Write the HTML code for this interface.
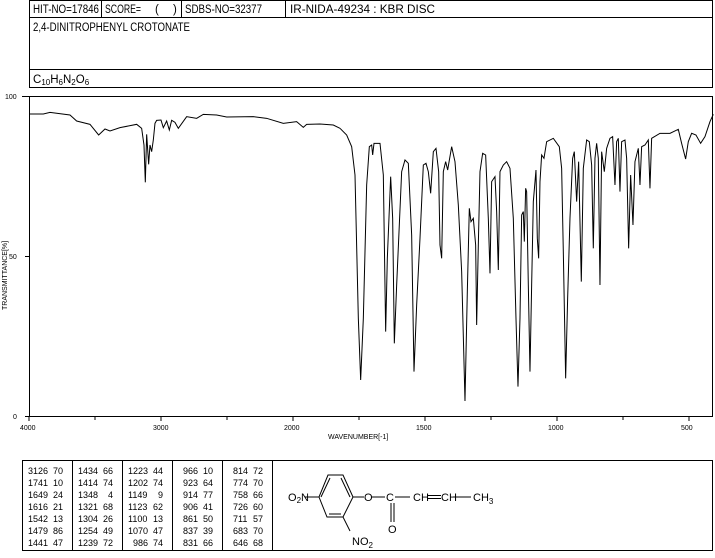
<!DOCTYPE html>
<html><head><meta charset="utf-8"><style>
body{margin:0;background:#fff;width:715px;height:553px;overflow:hidden;font-family:"Liberation Sans",sans-serif}
svg text{font-family:"Liberation Sans",sans-serif;fill:#000}
</style></head><body>
<svg width="715" height="553" viewBox="0 0 715 553" xmlns="http://www.w3.org/2000/svg">
<g fill="none" stroke="#000" stroke-width="1">
<rect x="29.5" y="0.5" width="683" height="87"/>
<line x1="29" y1="17.5" x2="713" y2="17.5"/>
<line x1="101.5" y1="0" x2="101.5" y2="17"/>
<line x1="181.5" y1="0" x2="181.5" y2="17"/>
<line x1="285.5" y1="0" x2="285.5" y2="17"/>
<line x1="29" y1="69.5" x2="713" y2="69.5"/>
<rect x="29.5" y="96.5" width="683" height="320"/>
<line x1="22" y1="96.5" x2="29" y2="96.5"/>
<line x1="25" y1="256.5" x2="29" y2="256.5"/>
<line x1="25" y1="416.5" x2="29" y2="416.5"/>
</g>
<g font-size="11.5">
<text x="33" y="13" textLength="66" lengthAdjust="spacingAndGlyphs">HIT-NO=17846</text>
<text x="105" y="13" textLength="36" lengthAdjust="spacingAndGlyphs">SCORE=</text>
<text x="155" y="13">(</text><text x="173" y="13">)</text>
<text x="185" y="13" textLength="77" lengthAdjust="spacingAndGlyphs">SDBS-NO=32377</text>
<text x="290" y="13" textLength="145" lengthAdjust="spacingAndGlyphs">IR-NIDA-49234 : KBR DISC</text>
<text x="33" y="31" textLength="157" lengthAdjust="spacingAndGlyphs">2,4-DINITROPHENYL CROTONATE</text>
<text x="33" y="83" font-size="11.5">C<tspan font-size="8" dy="2">10</tspan><tspan dy="-2">H</tspan><tspan font-size="8" dy="2">6</tspan><tspan dy="-2">N</tspan><tspan font-size="8" dy="2">2</tspan><tspan dy="-2">O</tspan><tspan font-size="8" dy="2">6</tspan></text>
</g>
<g font-size="7">
<text x="5" y="99">100</text>
<text x="9" y="259">50</text>
<text x="13" y="419">0</text>
<text x="20" y="430">4000</text>
<text x="153" y="430">3000</text>
<text x="284" y="430">2000</text>
<text x="416" y="430">1500</text>
<text x="548" y="430">1000</text>
<text x="681" y="430">500</text>
<text x="328" y="439">WAVENUMBER[-1]</text>
<text transform="translate(7,310) rotate(-90)">TRANSMITTANCE[%]</text>
</g>
<g stroke="#000" stroke-width="1">
<line x1="29" y1="417" x2="29" y2="421"/><line x1="95" y1="417" x2="95" y2="420"/><line x1="161" y1="417" x2="161" y2="421"/><line x1="227" y1="417" x2="227" y2="420"/><line x1="293" y1="417" x2="293" y2="421"/><line x1="359" y1="417" x2="359" y2="420"/><line x1="425" y1="417" x2="425" y2="421"/><line x1="491" y1="417" x2="491" y2="420"/><line x1="557" y1="417" x2="557" y2="421"/><line x1="623" y1="417" x2="623" y2="420"/><line x1="689" y1="417" x2="689" y2="421"/>
</g>
<g fill="none" stroke="#000" stroke-width="3" transform="translate(0,85) scale(0.3333)">
<path d="M90,87 L130,87 150,82 210,90 230,108 270,118 296,150 315,132 330,138 360,128 410,118 425,130 432,180 436,292 440,148 446,238 450,180 455,200 460,165 465,115 470,106 483,105 490,128 500,108 508,135 515,106 525,112 535,130 560,95 590,100 610,88 650,90 680,96 760,95 800,100 850,115 890,110 910,127 920,118 960,117 1000,120 1020,130"/>
</g>
<g fill="none" stroke="#000" stroke-width="3" transform="translate(340,85) scale(0.3333)">
<path d="M0,130 L20,150 35,185 45,270 55,700 62,885 70,700 80,300 88,185 95,180 98,210 102,175 120,175 130,270 137,740 142,520 152,275 158,400 163,775 170,600 185,260 195,225 205,235 215,450 222,860 230,660 240,460 250,240 258,235 265,260 272,325 280,200 288,190 296,260 300,480 305,520 310,260 317,230 323,255 335,185 345,230 355,360 365,560 375,948 382,620 388,370 393,410 400,400 407,480 410,720 415,480 420,260 428,205 437,210 445,400 450,565 455,290 465,275 470,380 475,555 480,260 490,240 500,230 510,250 520,400 528,700 534,905 540,700 545,390 550,380 553,470 557,310 560,320 565,600 570,860 575,600 580,350 588,255 592,460 596,520 600,290 605,210 612,220 620,170 640,160 658,185 665,250 670,500 677,880 683,640 690,400 698,220 703,200 710,350 716,230 724,590 730,250 740,165 748,170 755,240 760,490 765,220 770,175 775,220 780,600 785,200 793,260 800,190 810,160 818,155 825,300 830,170 835,160 840,320 845,170 855,165 860,220 866,490 872,270 879,420 885,230 895,190 900,300 905,185 915,180 925,165 930,310 935,160 960,145 990,145 1015,133 1025,175 1037,222 1045,170 1055,145 1068,150 1082,175 1095,155 1110,110 1120,88"/>
</g>
<g fill="none" stroke="#000" stroke-width="1">
<rect x="22.5" y="460.5" width="690" height="90"/>
<line x1="72.5" y1="460" x2="72.5" y2="551"/>
<line x1="122.5" y1="460" x2="122.5" y2="551"/>
<line x1="172.5" y1="460" x2="172.5" y2="551"/>
<line x1="222.5" y1="460" x2="222.5" y2="551"/>
<line x1="272.5" y1="460" x2="272.5" y2="551"/>
</g>
<g font-size="9" font-family="Liberation Mono">
<text x="28" y="474">3126</text><text x="28" y="486">1741</text><text x="28" y="498">1649</text><text x="28" y="510">1616</text><text x="28" y="522">1542</text><text x="28" y="534">1479</text><text x="28" y="546">1441</text>
<text x="53" y="474">70</text><text x="53" y="486">10</text><text x="53" y="498">24</text><text x="53" y="510">21</text><text x="53" y="522">13</text><text x="53" y="534">86</text><text x="53" y="546">47</text>
<text x="78" y="474">1434</text><text x="78" y="486">1414</text><text x="78" y="498">1348</text><text x="78" y="510">1321</text><text x="78" y="522">1304</text><text x="78" y="534">1254</text><text x="78" y="546">1239</text>
<text x="103" y="474">66</text><text x="103" y="486">74</text><text x="108" y="498">4</text><text x="103" y="510">68</text><text x="103" y="522">26</text><text x="103" y="534">49</text><text x="103" y="546">72</text>
<text x="128" y="474">1223</text><text x="128" y="486">1202</text><text x="128" y="498">1149</text><text x="128" y="510">1123</text><text x="128" y="522">1100</text><text x="128" y="534">1070</text><text x="133" y="546">986</text>
<text x="153" y="474">44</text><text x="153" y="486">74</text><text x="158" y="498">9</text><text x="153" y="510">62</text><text x="153" y="522">13</text><text x="153" y="534">47</text><text x="153" y="546">74</text>
<text x="183" y="474">966</text><text x="183" y="486">923</text><text x="183" y="498">914</text><text x="183" y="510">906</text><text x="183" y="522">861</text><text x="183" y="534">837</text><text x="183" y="546">831</text>
<text x="203" y="474">10</text><text x="203" y="486">64</text><text x="203" y="498">77</text><text x="203" y="510">41</text><text x="203" y="522">50</text><text x="203" y="534">39</text><text x="203" y="546">66</text>
<text x="233" y="474">814</text><text x="233" y="486">774</text><text x="233" y="498">758</text><text x="233" y="510">726</text><text x="233" y="522">711</text><text x="233" y="534">683</text><text x="233" y="546">646</text>
<text x="253" y="474">72</text><text x="253" y="486">70</text><text x="253" y="498">66</text><text x="253" y="510">60</text><text x="253" y="522">57</text><text x="253" y="534">70</text><text x="253" y="546">68</text>
</g>
<g fill="none" stroke="#000" stroke-width="1">
<path d="M328,475 L343,475 353,497 343,517 327,517 319,497 Z"/>
<line x1="330" y1="478" x2="321" y2="497"/>
<line x1="341" y1="478" x2="350" y2="497"/>
<line x1="329" y1="514" x2="341" y2="514"/>
<line x1="305" y1="497" x2="319" y2="497"/>
<line x1="353" y1="497" x2="364" y2="497"/>
<line x1="372" y1="497" x2="385" y2="497"/>
<line x1="395" y1="497" x2="410" y2="497"/>
<line x1="427" y1="495.5" x2="441" y2="495.5"/>
<line x1="427" y1="498.5" x2="441" y2="498.5"/>
<line x1="453" y1="497" x2="471" y2="497"/>
<line x1="391" y1="503" x2="391" y2="522"/>
<line x1="394" y1="503" x2="394" y2="522"/>
<line x1="343" y1="517" x2="350" y2="531"/>
</g>
<g font-size="11">
<text x="288" y="501">O<tspan font-size="8" dy="2">2</tspan><tspan dy="-2">N</tspan></text>
<text x="364" y="501">O</text>
<text x="386" y="501">C</text>
<text x="413" y="501">CH</text>
<text x="441" y="501">CH</text>
<text x="473" y="501">CH<tspan font-size="8" dy="3">3</tspan></text>
<text x="388" y="533">O</text>
<text x="352" y="545">NO<tspan font-size="8" dy="3">2</tspan></text>
</g>
</svg>
</body></html>
